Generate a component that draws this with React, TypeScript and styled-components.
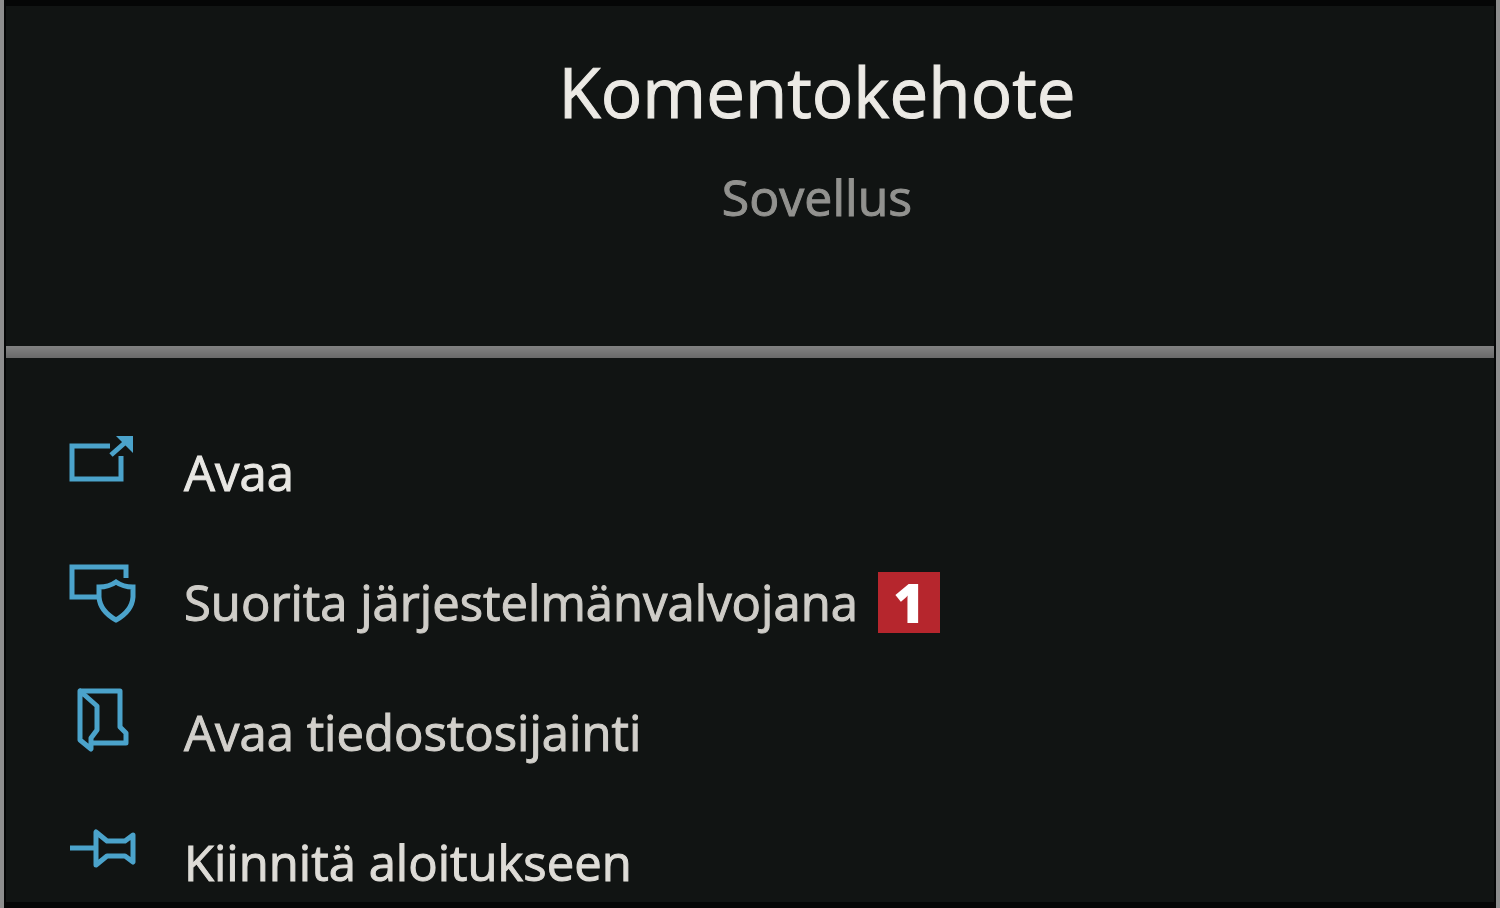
import React from "react";
import styled, { createGlobalStyle } from "styled-components";

const GlobalStyle = createGlobalStyle`
  *, *::before, *::after { box-sizing: border-box; }
  body {
    margin: 0;
    background: #8e8e8e;
    font-family: "Open Sans", "Noto Sans", sans-serif;
  }
`;

const Panel = styled.main`
  min-height: 100vh;
  margin: 0 4px;
  background: #111413;
  border: 2px solid #050606;
  border-top-width: 6px;
  border-bottom-width: 6px;
`;

const Header = styled.header`
  height: 340px;
  padding: 35px 0 0 134px;
  text-align: center;
`;

const Title = styled.h1`
  margin: 0;
  font-size: 69px;
  line-height: 100px;
  font-weight: 400;
  color: #eceae5;
  -webkit-text-stroke: 1px currentColor;
`;

const Subtitle = styled.p`
  margin: 20px 0 0;
  font-size: 50px;
  line-height: 72px;
  color: #92928f;
  -webkit-text-stroke: 1px currentColor;
`;

const Divider = styled.hr`
  height: 12px;
  margin: 0;
  border: 0;
  background: linear-gradient(#828282, #6a6a6a);
`;

const Menu = styled.ul`
  display: flex;
  flex-direction: column;
  gap: 50px;
  margin: 0;
  padding: 69px 54px 0;
  list-style: none;
`;

const MenuButton = styled.button<{ $tone: string }>`
  display: flex;
  align-items: flex-start;
  width: 100%;
  height: 80px;
  padding: 0;
  border: 0;
  background: none;
  color: ${(p) => p.$tone};
  font-family: inherit;
  font-size: 49px;
  text-align: left;
  cursor: pointer;
`;

const Icon = styled.svg`
  flex: none;
  width: 80px;
  height: 80px;
  margin-right: 44px;
  fill: none;
  stroke: #4ba3cb;
  stroke-width: 5;
`;

const Label = styled.span`
  padding-top: 10px;
  line-height: 70px;
  white-space: nowrap;
  -webkit-text-stroke: 1px currentColor;
`;

const Badge = styled.span`
  flex: none;
  width: 62px;
  height: 61px;
  margin: 15px 0 0 20px;
  background: #b6262d;
  color: #fff;
  font-size: 54px;
  font-weight: 800;
  line-height: 61px;
  text-align: center;
`;

const OpenIcon = () => (
  <Icon viewBox="0 0 80 80" aria-hidden="true">
    <path d="M50 19H12V52H61V29M51 28L68 13" />
    <path d="M56 9H73V26Z" fill="#4ba3cb" stroke="none" />
  </Icon>
);

const ShieldIcon = () => (
  <Icon viewBox="0 0 80 80" aria-hidden="true">
    <path d="M66 21V10H12V40H37" />
    <path d="M56 25Q49 30 39 30V40Q40 54 56 63Q72 54 73 40V30Q63 30 56 25Z" />
  </Icon>
);

const FolderIcon = () => (
  <Icon viewBox="0 0 80 80" aria-hidden="true" strokeLinejoin="round">
    <path d="M20 4H60V40L66 46V56H32" />
    <path d="M20 4V53L31 62V51L37 43V19Z" />
  </Icon>
);

const PinIcon = () => (
  <Icon viewBox="0 0 80 80" aria-hidden="true" strokeLinejoin="round">
    <path d="M10 31H37" />
    <path d="M36 15V48L47 39H65L73 45V18L65 24H47Z" />
  </Icon>
);

const items = [
  { label: "Avaa", icon: OpenIcon, tone: "#e8e7e3" },
  { label: "Suorita järjestelmänvalvojana", icon: ShieldIcon, tone: "#cfcdc8", badge: "1" },
  { label: "Avaa tiedostosijainti", icon: FolderIcon, tone: "#d2d0cb" },
  { label: "Kiinnitä aloitukseen", icon: PinIcon, tone: "#dedcd7" },
];

export default function App() {
  return (
    <>
      <GlobalStyle />
      <Panel>
        <Header>
          <Title>Komentokehote</Title>
          <Subtitle>Sovellus</Subtitle>
        </Header>
        <Divider />
        <Menu>
          {items.map(({ label, icon: ItemIcon, tone, badge }) => (
            <li key={label}>
              <MenuButton type="button" $tone={tone}>
                <ItemIcon />
                <Label>{label}</Label>
                {badge && <Badge>{badge}</Badge>}
              </MenuButton>
            </li>
          ))}
        </Menu>
      </Panel>
    </>
  );
}
